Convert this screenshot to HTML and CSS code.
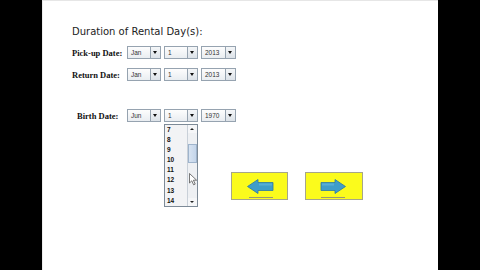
FILE: index.html
```html
<!DOCTYPE html>
<html>
<head>
<meta charset="utf-8">
<link rel="stylesheet" href="styles.css">
</head>
<body>
<div class="page">
  <div class="title">Duration of Rental Day(s):</div>

  <div class="row r1">
    <span class="label">Pick-up Date:</span>
    <div class="combo w34"><span class="val">Jan</span><span class="btn"></span></div>
    <div class="combo w34"><span class="val">1</span><span class="btn"></span></div>
    <div class="combo w35"><span class="val">2013</span><span class="btn"></span></div>
  </div>

  <div class="row r2">
    <span class="label">Return Date:</span>
    <div class="combo w34"><span class="val">Jan</span><span class="btn"></span></div>
    <div class="combo w34"><span class="val">1</span><span class="btn"></span></div>
    <div class="combo w35"><span class="val">2013</span><span class="btn"></span></div>
  </div>

  <div class="row birth">
    <span class="label indent">Birth Date:</span>
    <div class="combo w34"><span class="val">Jun</span><span class="btn"></span></div>
    <div class="combo w34 open">
      <span class="val">1</span><span class="btn"></span>
      <div class="list">
        <ul class="items">
          <li>7</li><li>8</li><li>9</li><li>10</li><li>11</li><li>12</li><li>13</li><li>14</li>
        </ul>
        <div class="sbar">
          <span class="sarrow up"></span>
          <span class="track"><span class="thumb"></span></span>
          <span class="sarrow down"></span>
        </div>
      </div>
    </div>
    <div class="combo w35"><span class="val">1970</span><span class="btn"></span></div>
  </div>

  <div class="nav">
    <button class="navbtn" type="button" aria-label="Back">
      <svg width="57" height="28" viewBox="0 0 57 28">
        <path d="M16.5 14.5 L27 7.5 L27 10.5 L42 10.5 L42 18.5 L27 18.5 L27 21.5 Z" fill="#3f9dc9" stroke="#2b78a3" stroke-width="0.8"/>
        <path d="M28 11.5 L41 11.5 L41 13.5 L28 13.5 Z" fill="#62b6da" opacity="0.7"/>
        <line x1="18" y1="25.5" x2="42" y2="25.5" stroke="#9a9a70" stroke-width="1"/>
      </svg>
    </button>
    <button class="navbtn" type="button" aria-label="Next">
      <svg width="58" height="28" viewBox="0 0 58 28">
        <path d="M40.5 14.5 L30 7.5 L30 10.5 L16 10.5 L16 18.5 L30 18.5 L30 21.5 Z" fill="#3f9dc9" stroke="#2b78a3" stroke-width="0.8"/>
        <path d="M17 11.5 L29 11.5 L29 13.5 L17 13.5 Z" fill="#62b6da" opacity="0.7"/>
        <line x1="16" y1="25.5" x2="40" y2="25.5" stroke="#9a9a70" stroke-width="1"/>
      </svg>
    </button>
  </div>

  <svg class="cursor" width="9" height="13" viewBox="0 0 9 13">
    <path d="M0.5 0.5 L0.5 10 L2.8 7.8 L4.6 11.8 L6.2 11.1 L4.4 7.2 L7.6 7.2 Z" fill="#fff" stroke="#555" stroke-width="0.8"/>
  </svg>
</div>
</body>
</html>
```

FILE: styles.css
```css
html, body {
  margin: 0;
  padding: 0;
  background: #000;
  height: 270px;
  overflow: hidden;
}

.page {
  position: relative;
  width: 396px;
  height: 270px;
  margin: 0 auto;
  background: #fff;
  box-sizing: border-box;
  padding: 24px 0 0 29px;
  display: flex;
  flex-direction: column;
  align-items: flex-start;
  border-top: 1px solid #e6e6e6;
  border-left: 1px solid #ececec;
}

.title {
  font-family: "DejaVu Sans", sans-serif;
  font-size: 10px;
  line-height: 14px;
  color: #222;
}

.row {
  display: flex;
  align-items: center;
  gap: 3px;
}

.r1 { margin-top: 7px; }
.r2 { margin-top: 9px; }
.birth { margin-top: 28px; }

.label {
  width: 52px;
  font-family: "Liberation Serif", serif;
  font-weight: bold;
  font-size: 8.5px;
  color: #111;
  white-space: nowrap;
}

.label.indent {
  padding-left: 5px;
  width: 47px;
}

.combo {
  position: relative;
  display: flex;
  height: 13px;
  box-sizing: border-box;
  border: 1px solid #96a3b0;
  background: linear-gradient(#fdfdfd, #e9edf1);
}

.w34 { width: 34px; }
.w35 { width: 35px; }

.val {
  flex: 1;
  padding-left: 3px;
  font-family: "Liberation Sans", sans-serif;
  font-size: 6.5px;
  line-height: 11px;
  color: #333;
}

.btn {
  position: relative;
  width: 9px;
  border-left: 1px solid #96a3b0;
  background: linear-gradient(#f4f6f8, #dce2e8);
}

.btn::after {
  content: "";
  position: absolute;
  left: 2px;
  top: 4px;
  border-left: 2.5px solid transparent;
  border-right: 2.5px solid transparent;
  border-top: 3px solid #111;
}

.list {
  position: absolute;
  left: -1px;
  top: 14px;
  width: 34px;
  height: 83px;
  box-sizing: border-box;
  border: 1px solid #7d8a97;
  background: #f2f3f5;
  display: flex;
}

.items {
  flex: 1;
  margin: 0;
  padding: 0;
  list-style: none;
}

.items li {
  height: 10.1px;
  line-height: 10px;
  padding-left: 2px;
  font-family: "Liberation Sans", sans-serif;
  font-weight: bold;
  font-size: 6.5px;
  color: #111;
}

.sbar {
  width: 9px;
  display: flex;
  flex-direction: column;
  border-left: 1px solid #c9d0d8;
  background: #eef0f3;
}

.sarrow {
  position: relative;
  height: 8px;
  background: #f5f6f8;
}

.sarrow::after {
  content: "";
  position: absolute;
  left: 2px;
  border-left: 2px solid transparent;
  border-right: 2px solid transparent;
}

.sarrow.up::after {
  top: 3px;
  border-bottom: 2.5px solid #222;
}

.sarrow.down::after {
  top: 3px;
  border-top: 2.5px solid #222;
}

.track {
  flex: 1;
  position: relative;
}

.thumb {
  position: absolute;
  left: 0;
  right: 0;
  top: 11px;
  height: 19px;
  box-sizing: border-box;
  border: 1px solid #9fb4cc;
  background: linear-gradient(90deg, #d7e3f1, #c4d5ea);
}

.nav {
  display: flex;
  gap: 17px;
  margin-top: 50px;
  margin-left: 159px;
}

.navbtn {
  width: 57px;
  height: 28px;
  padding: 0;
  margin: 0;
  border: 1px solid #a6a68a;
  background: #fbfb1c;
  display: block;
}

.navbtn + .navbtn { width: 58px; }

.navbtn svg { display: block; margin: -1px; }

.cursor {
  position: absolute;
  left: 146px;
  top: 172px;
}
```
